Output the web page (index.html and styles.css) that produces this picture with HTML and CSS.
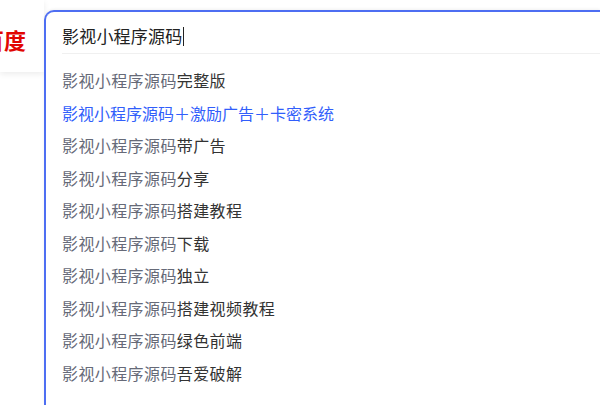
FILE: index.html
```html
<!DOCTYPE html>
<html lang="zh-CN">

<head>
    <meta charset="UTF-8">
    <meta name="viewport" content="width=device-width, initial-scale=1.0">
    <title>百度一下</title>
    <link rel="stylesheet" href="styles.css">
</head>

<body>

    <div class="page">
        <!-- left part of the header, logo cut off by the window -->
        <div class="side">
            <div class="brand">
                <span class="logo">百度</span>
            </div>
        </div>

        <!-- search box with the open suggestion list -->
        <div class="search">
            <div class="query-row">
                <span class="query">影视小程序源码</span><span class="caret"></span>
            </div>
            <ul class="suggest">
                <li>影视小程序源码<b>完整版</b></li>
                <li class="hot">影视小程序源码＋激励广告＋卡密系统</li>
                <li>影视小程序源码<b>带广告</b></li>
                <li>影视小程序源码<b>分享</b></li>
                <li>影视小程序源码<b>搭建教程</b></li>
                <li>影视小程序源码<b>下载</b></li>
                <li>影视小程序源码<b>独立</b></li>
                <li>影视小程序源码<b>搭建视频教程</b></li>
                <li>影视小程序源码<b>绿色前端</b></li>
                <li>影视小程序源码<b>吾爱破解</b></li>
            </ul>
        </div>
    </div>

</body>

</html>
```

FILE: styles.css
```css
* {
    box-sizing: border-box;
}

body {
    margin: 0;
    background: #fff;
    font-family: "Noto Sans CJK SC", "Noto Sans", sans-serif;
    color: #222;
}

.page {
    display: flex;
    width: 600px;
    height: 405px;
    overflow: hidden;
}

.side {
    width: 44px;
    flex-shrink: 0;
}

.brand {
    height: 72px;
    padding-top: 6px;
    display: flex;
    align-items: center;
    overflow: hidden;
    background: #fff;
    box-shadow: 0 2px 6px rgba(0, 0, 0, 0.08);
}

.logo {
    margin-left: -18px;
    font-size: 22px;
    font-weight: 700;
    line-height: 22px;
    color: #e10602;
    white-space: nowrap;
}

.search {
    flex: 1;
    margin-top: 10px;
    border: 2px solid #4e6ef2;
    border-right: none;
    border-bottom: none;
    border-top-left-radius: 10px;
    background: #fff;
    box-shadow: 0 -1px 3px rgba(0, 0, 0, 0.06);
}

.query-row {
    margin-left: 16px;
    padding-top: 7px;
    height: 42px;
    line-height: 34px;
    border-bottom: 1px solid #f0f0f0;
    font-size: 17px;
    letter-spacing: 0.2px;
    display: flex;
    align-items: center;
}

.query {
    color: #222;
}

.caret {
    display: inline-block;
    width: 1px;
    height: 19px;
    margin-left: 1px;
    background: #222;
}

.suggest {
    list-style: none;
    margin: 0;
    padding: 10px 0 0 16px;
}

.suggest li {
    height: 32.5px;
    line-height: 32.5px;
    font-size: 16px;
    letter-spacing: 0.4px;
    color: #666a78;
    white-space: nowrap;
}

.suggest li b {
    font-weight: 400;
    color: #333;
}

.suggest li.hot {
    color: #315efb;
    letter-spacing: 0;
}
```
